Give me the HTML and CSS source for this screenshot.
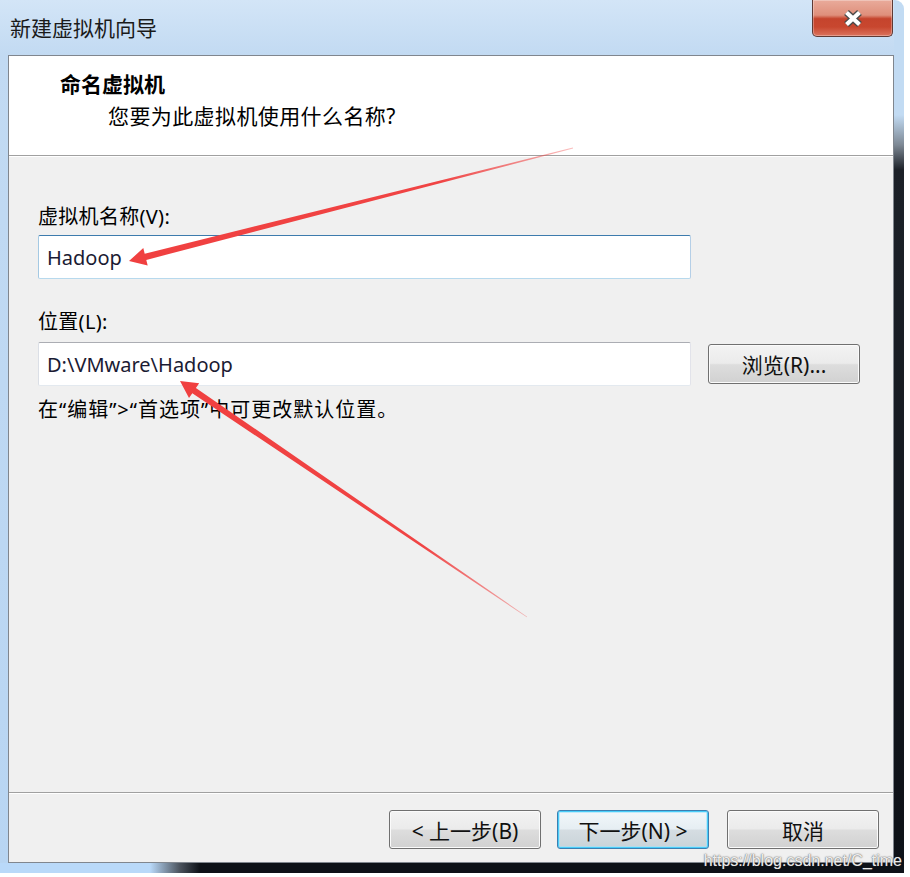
FILE: index.html
```html
<!DOCTYPE html>
<html lang="zh-CN">
<head>
<meta charset="utf-8">
<title>新建虚拟机向导</title>
<link rel="stylesheet" href="styles.css">
</head>
<body>
<div class="window">
  <div class="titlebar">
    <span class="title">新建虚拟机向导</span>
    <div class="close" aria-label="关闭">
      <svg class="close-x" width="22" height="19" viewBox="0 0 22 19">
        <path d="M4.5 3.5 L17.5 15.5 M17.5 3.5 L4.5 15.5" stroke="#4a4a4a" stroke-width="7" fill="none"/>
        <path d="M4.5 3.5 L17.5 15.5 M17.5 3.5 L4.5 15.5" stroke="#ffffff" stroke-width="4.2" fill="none"/>
      </svg>
    </div>
  </div>
  <div class="panel">
    <div class="header">
      <div class="h-title">命名虚拟机</div>
      <div class="h-sub">您要为此虚拟机使用什么名称?</div>
    </div>
    <div class="body">
      <div class="label">虚拟机名称(V):</div>
      <div class="field focused">Hadoop</div>
      <div class="label second">位置(L):</div>
      <div class="row">
        <div class="field">D:\VMware\Hadoop</div>
        <div class="btn browse">浏览(R)...</div>
      </div>
      <div class="hint">在“编辑”&gt;“首选项”中可更改默认位置。</div>
    </div>
    <div class="footer">
      <div class="btn">&lt; 上一步(B)</div>
      <div class="btn default">下一步(N) &gt;</div>
      <div class="btn cancel">取消</div>
    </div>
  </div>
</div>
<svg class="annot" width="910" height="877" viewBox="0 0 910 877">
  <defs>
    <linearGradient id="g1" gradientUnits="userSpaceOnUse" x1="573" y1="148" x2="129" y2="261">
      <stop offset="0" stop-color="#f04444" stop-opacity="0.35"/>
      <stop offset="0.3" stop-color="#f04444" stop-opacity="1"/>
      <stop offset="1" stop-color="#f04040" stop-opacity="1"/>
    </linearGradient>
    <linearGradient id="g2" gradientUnits="userSpaceOnUse" x1="527" y1="617" x2="180" y2="381">
      <stop offset="0" stop-color="#f04444" stop-opacity="0.35"/>
      <stop offset="0.3" stop-color="#f04444" stop-opacity="1"/>
      <stop offset="1" stop-color="#f04040" stop-opacity="1"/>
    </linearGradient>
  </defs>
  <polygon fill="url(#g1)" points="572.9,147.6 144.7,253.7 143.3,248.1 129,261 147.7,265.5 146.3,259.9 573.1,148.4"/>
  <polygon fill="url(#g2)" points="527.2,616.7 195.9,388.0 199.2,383.2 180,381 189.0,398.0 192.3,393.2 526.8,617.3"/>
</svg>
<div class="watermark">https://blog.csdn.net/C_time</div>
</body>
</html>
```

FILE: styles.css
```css
html, body {
  margin: 0;
  padding: 0;
}

body {
  width: 910px;
  height: 877px;
  background: #ffffff;
  position: relative;
  overflow: hidden;
  font-family: "Noto Sans", "Noto Sans CJK SC", sans-serif;
  color: #000;
}

.window {
  width: 904px;
  height: 873px;
  box-sizing: border-box;
  padding: 0 10px 10px 8px;
  border-top-right-radius: 9px;
  display: flex;
  flex-direction: column;
  background:
    linear-gradient(to bottom, #c2dbf3 0, #c2dbf3 115px, #7d8894 145px, #1c2128 170px, #0d1117 100%) right top / 10px 100% no-repeat,
    linear-gradient(to right, #b9d9f9 0, #b9d9f9 150px, #4a525c 180px, #0d1117 200px, #0d1117 100%) left bottom / 100% 10px no-repeat,
    linear-gradient(to bottom, #d3e5f7 0, #c2daf2 55px, #b8d5f2 100%);
}

.titlebar {
  height: 55px;
  display: flex;
  justify-content: space-between;
  align-items: flex-start;
}

.title {
  padding: 15px 0 0 2px;
  font-size: 21px;
  line-height: 26px;
  color: #1a1a1a;
}

.close {
  width: 81px;
  height: 37px;
  box-sizing: border-box;
  margin-right: 1px;
  border: 1px solid #5e3a35;
  border-top: none;
  border-radius: 0 0 5px 5px;
  background: linear-gradient(to bottom, #e9ab9b 0, #df8f7b 42%, #c5442d 52%, #c8472f 75%, #db735d 100%);
  box-shadow: inset 0 0 0 1px rgba(255, 255, 255, 0.3);
  display: flex;
  align-items: center;
  justify-content: center;
}

.close-x {
  display: block;
  margin-top: 1px;
}

.panel {
  flex: 1;
  display: flex;
  flex-direction: column;
  border: 1px solid #80868e;
  background: #f0f0f0;
}

.header {
  height: 100px;
  box-sizing: border-box;
  background: #ffffff;
  border-bottom: 1px solid #a0a0a0;
  padding: 15px 0 0 51px;
}

.h-title {
  font-size: 21px;
  line-height: 26px;
  font-weight: bold;
}

.h-sub {
  font-size: 21px;
  line-height: 26px;
  margin-top: 6px;
  padding-left: 48px;
  letter-spacing: 0.4px;
}

.body {
  flex: 1;
  border-top: 1px solid #ffffff;
  border-bottom: 1px solid #a0a0a0;
  padding: 48px 0 0 29px;
}

.label {
  font-size: 20px;
  line-height: 24px;
  height: 24px;
  letter-spacing: 0.3px;
}

.label.second {
  margin-top: 31px;
}

.field {
  box-sizing: border-box;
  width: 653px;
  height: 44px;
  margin-top: 6px;
  border: 1px solid;
  border-color: #abadb3 #e2e3ea #e3e9ef #dbdfe6;
  border-radius: 2px;
  background: #ffffff;
  padding-left: 8px;
  display: flex;
  align-items: center;
  font-size: 20px;
  color: #1b1b33;
}

.field.focused {
  border-color: #3d7bad #b5cfe7 #b7d9ed #a4c9e3;
}

.row {
  display: flex;
  align-items: center;
  margin-top: 8px;
  height: 44px;
}

.row .field {
  margin-top: 0;
}

.btn {
  box-sizing: border-box;
  width: 152px;
  height: 39px;
  border: 1px solid #707070;
  border-radius: 3px;
  background: linear-gradient(to bottom, #f3f3f3 0, #ebebeb 48%, #dddddd 52%, #d1d1d1 100%);
  box-shadow: inset 0 0 0 1px #fbfbfb;
  display: flex;
  align-items: center;
  justify-content: center;
  font-size: 21px;
  color: #111;
}

.btn.browse {
  height: 40px;
  margin-left: 17px;
}

.hint {
  margin-top: 12px;
  font-size: 20px;
  line-height: 24px;
  letter-spacing: 1px;
}

.footer {
  height: 69px;
  box-sizing: border-box;
  border-top: 1px solid #ffffff;
  padding: 16px 14px 0 0;
  display: flex;
  justify-content: flex-end;
  align-items: flex-start;
}

.footer .btn + .btn {
  margin-left: 16px;
}

.footer .btn.cancel {
  margin-left: 18px;
}

.btn.default {
  border-color: #3c7fb1;
  box-shadow: inset 0 0 0 1px #48cdf9, inset 0 0 0 2px rgba(160, 225, 250, 0.6);
  background: linear-gradient(to bottom, #f2f7fa 0, #e6eef3 48%, #d5dde2 52%, #c9d3d8 100%);
}

.annot {
  position: absolute;
  left: 0;
  top: 0;
  pointer-events: none;
}

.watermark {
  position: absolute;
  right: 8px;
  bottom: 7px;
  font-family: "Liberation Sans", Arial, sans-serif;
  font-size: 16px;
  line-height: 18px;
  color: rgba(255, 255, 255, 0.9);
  text-shadow: 0 0 1px #666, 0 0 2px rgba(0, 0, 0, 0.5);
}
```
